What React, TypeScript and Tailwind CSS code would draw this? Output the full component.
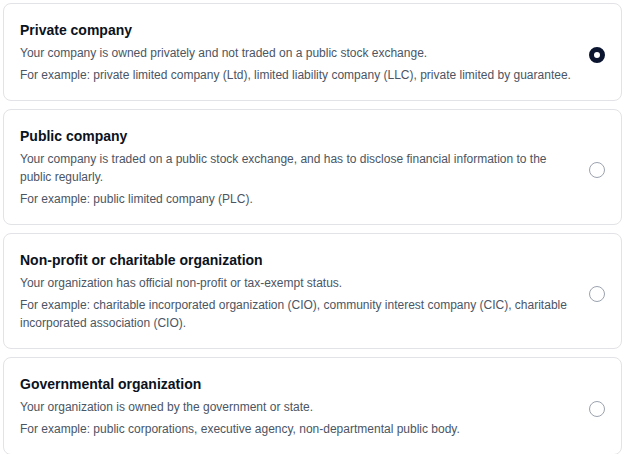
const options = [
  {
    title: "Private company",
    description: "Your company is owned privately and not traded on a public stock exchange.",
    example: "For example: private limited company (Ltd), limited liability company (LLC), private limited by guarantee.",
  },
  {
    title: "Public company",
    description:
      "Your company is traded on a public stock exchange, and has to disclose financial information to the public regularly.",
    example: "For example: public limited company (PLC).",
  },
  {
    title: "Non-profit or charitable organization",
    description: "Your organization has official non-profit or tax-exempt status.",
    example:
      "For example: charitable incorporated organization (CIO), community interest company (CIC), charitable incorporated association (CIO).",
  },
  {
    title: "Governmental organization",
    description: "Your organization is owned by the government or state.",
    example: "For example: public corporations, executive agency, non-departmental public body.",
  },
];

function Radio({ checked }: { checked: boolean }) {
  if (checked) {
    return (
      <span className="mt-[5px] block h-4 w-4 shrink-0 rounded-full border-[5px] border-[#0b1530] bg-white" />
    );
  }
  return <span className="mt-[5px] block h-4 w-4 shrink-0 rounded-full border border-[#9ca3af] bg-white" />;
}

export default function App() {
  return (
    <div className="min-h-screen bg-white pt-[3px] pl-[3px] pr-[1px] font-['Liberation_Sans',Arial,sans-serif]">
      <div className="flex flex-col gap-2">
        {options.map((opt, i) => (
          <label
            key={opt.title}
            className="flex items-center gap-4 rounded-lg border border-[#e2e3e6] bg-white px-4 py-4"
          >
            <div className="flex-1">
              <h3 className="mb-1 text-sm leading-5 font-bold text-[#0b1220]">{opt.title}</h3>
              <p className="text-xs leading-[18px] text-[#4b5563]">{opt.description}</p>
              <p className="mt-1 text-xs leading-[18px] text-[#4b5563]">{opt.example}</p>
            </div>
            <Radio checked={i === 0} />
          </label>
        ))}
      </div>
    </div>
  );
}
